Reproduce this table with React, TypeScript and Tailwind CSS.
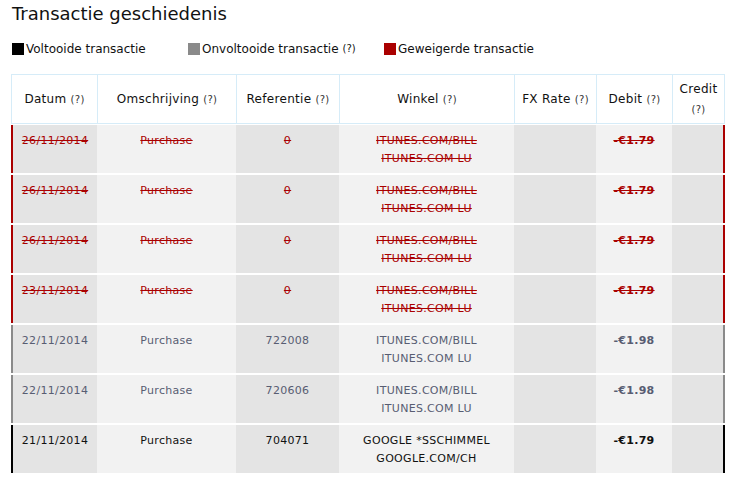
type Status = 'done' | 'pending' | 'declined'

interface Tx {
  date: string
  desc: string
  ref: string
  shop: [string, string]
  debit: string
  status: Status
}

const rows: Tx[] = [
  { date: '26/11/2014', desc: 'Purchase', ref: '0', shop: ['ITUNES.COM/BILL', 'ITUNES.COM LU'], debit: '-€1.79', status: 'declined' },
  { date: '26/11/2014', desc: 'Purchase', ref: '0', shop: ['ITUNES.COM/BILL', 'ITUNES.COM LU'], debit: '-€1.79', status: 'declined' },
  { date: '26/11/2014', desc: 'Purchase', ref: '0', shop: ['ITUNES.COM/BILL', 'ITUNES.COM LU'], debit: '-€1.79', status: 'declined' },
  { date: '23/11/2014', desc: 'Purchase', ref: '0', shop: ['ITUNES.COM/BILL', 'ITUNES.COM LU'], debit: '-€1.79', status: 'declined' },
  { date: '22/11/2014', desc: 'Purchase', ref: '722008', shop: ['ITUNES.COM/BILL', 'ITUNES.COM LU'], debit: '-€1.98', status: 'pending' },
  { date: '22/11/2014', desc: 'Purchase', ref: '720606', shop: ['ITUNES.COM/BILL', 'ITUNES.COM LU'], debit: '-€1.98', status: 'pending' },
  { date: '21/11/2014', desc: 'Purchase', ref: '704071', shop: ['GOOGLE *SSCHIMMEL', 'GOOGLE.COM/CH'], debit: '-€1.79', status: 'done' }
]

const statusStyles = {
  done: 'border-black text-[#111]',
  pending: 'border-[#8a8a8a] text-[#585d72]',
  declined: 'border-[#aa0000] text-[#aa0000] line-through'
}

function Help() {
  return <span className="text-[10px] text-[#333]">(?)</span>
}

function HeadCell({ children, className = '' }: { children: React.ReactNode; className?: string }) {
  return (
    <div className={`flex items-center justify-center text-center border-r border-[#d6ecf8] leading-[20px] ${className}`}>
      <div>{children}</div>
    </div>
  )
}

function LegendItem({ color, label, help, className = '' }: { color: string; label: string; help?: boolean; className?: string }) {
  return (
    <div className={`flex items-center ${className}`}>
      <span className={`w-[12px] h-[12px] ${color}`} />
      <span className="ml-[2px]">{label}</span>
      {help && <span className="ml-[4px] text-[10px]">(?)</span>}
    </div>
  )
}

function Row({ tx }: { tx: Tx }) {
  const dark = 'bg-[#e4e4e4]'
  const light = 'bg-[#f2f2f2]'
  return (
    <div className={`grid grid-cols-[84px_139px_103px_175px_82px_76px_51px] h-[48px] border-l-2 border-r-2 text-[11px] leading-[18px] tracking-[0.3px] text-center ${statusStyles[tx.status]}`}>
      <div className={`${dark} pt-[7px]`}>{tx.date}</div>
      <div className={`${light} pt-[7px]`}>{tx.desc}</div>
      <div className={`${dark} pt-[7px]`}>{tx.ref}</div>
      <div className={`${light} pt-[7px]`}>
        <div>{tx.shop[0]}</div>
        <div>{tx.shop[1]}</div>
      </div>
      <div className={dark} />
      <div className={`${light} pt-[7px] font-bold`}>{tx.debit}</div>
      <div className={dark} />
    </div>
  )
}

export default function App() {
  return (
    <div className="w-[738px] h-[482px] bg-white pl-[11px] pt-[3px] font-['DejaVu_Sans',Verdana,sans-serif] text-[#111]">
      <h1 className="ml-[1px] text-[18px] leading-[22px] text-[#111]">Transactie geschiedenis</h1>

      <div className="mt-[16px] ml-[1px] flex text-[12px] leading-[16px]">
        <LegendItem color="bg-black" label="Voltooide transactie" className="w-[176px]" />
        <LegendItem color="bg-[#8a8a8a]" label="Onvoltooide transactie" help className="w-[196px]" />
        <LegendItem color="bg-[#aa0000]" label="Geweigerde transactie" />
      </div>

      <div className="mt-[17px] w-[714px]">
        <div className="grid grid-cols-[87px_139px_103px_175px_82px_76px_52px] h-[50px] border-t border-b border-[#d6ecf8] text-[12px] tracking-[0.3px]">
          <HeadCell className="border-l">Datum <Help /></HeadCell>
          <HeadCell>Omschrijving <Help /></HeadCell>
          <HeadCell>Referentie <Help /></HeadCell>
          <HeadCell>Winkel <Help /></HeadCell>
          <HeadCell>FX Rate <Help /></HeadCell>
          <HeadCell>Debit <Help /></HeadCell>
          <HeadCell>Credit<br /><Help /></HeadCell>
        </div>
        <div className="flex flex-col gap-[2px] pt-[1px]">
          {rows.map((tx, i) => (
            <Row key={i} tx={tx} />
          ))}
        </div>
      </div>
    </div>
  )
}
